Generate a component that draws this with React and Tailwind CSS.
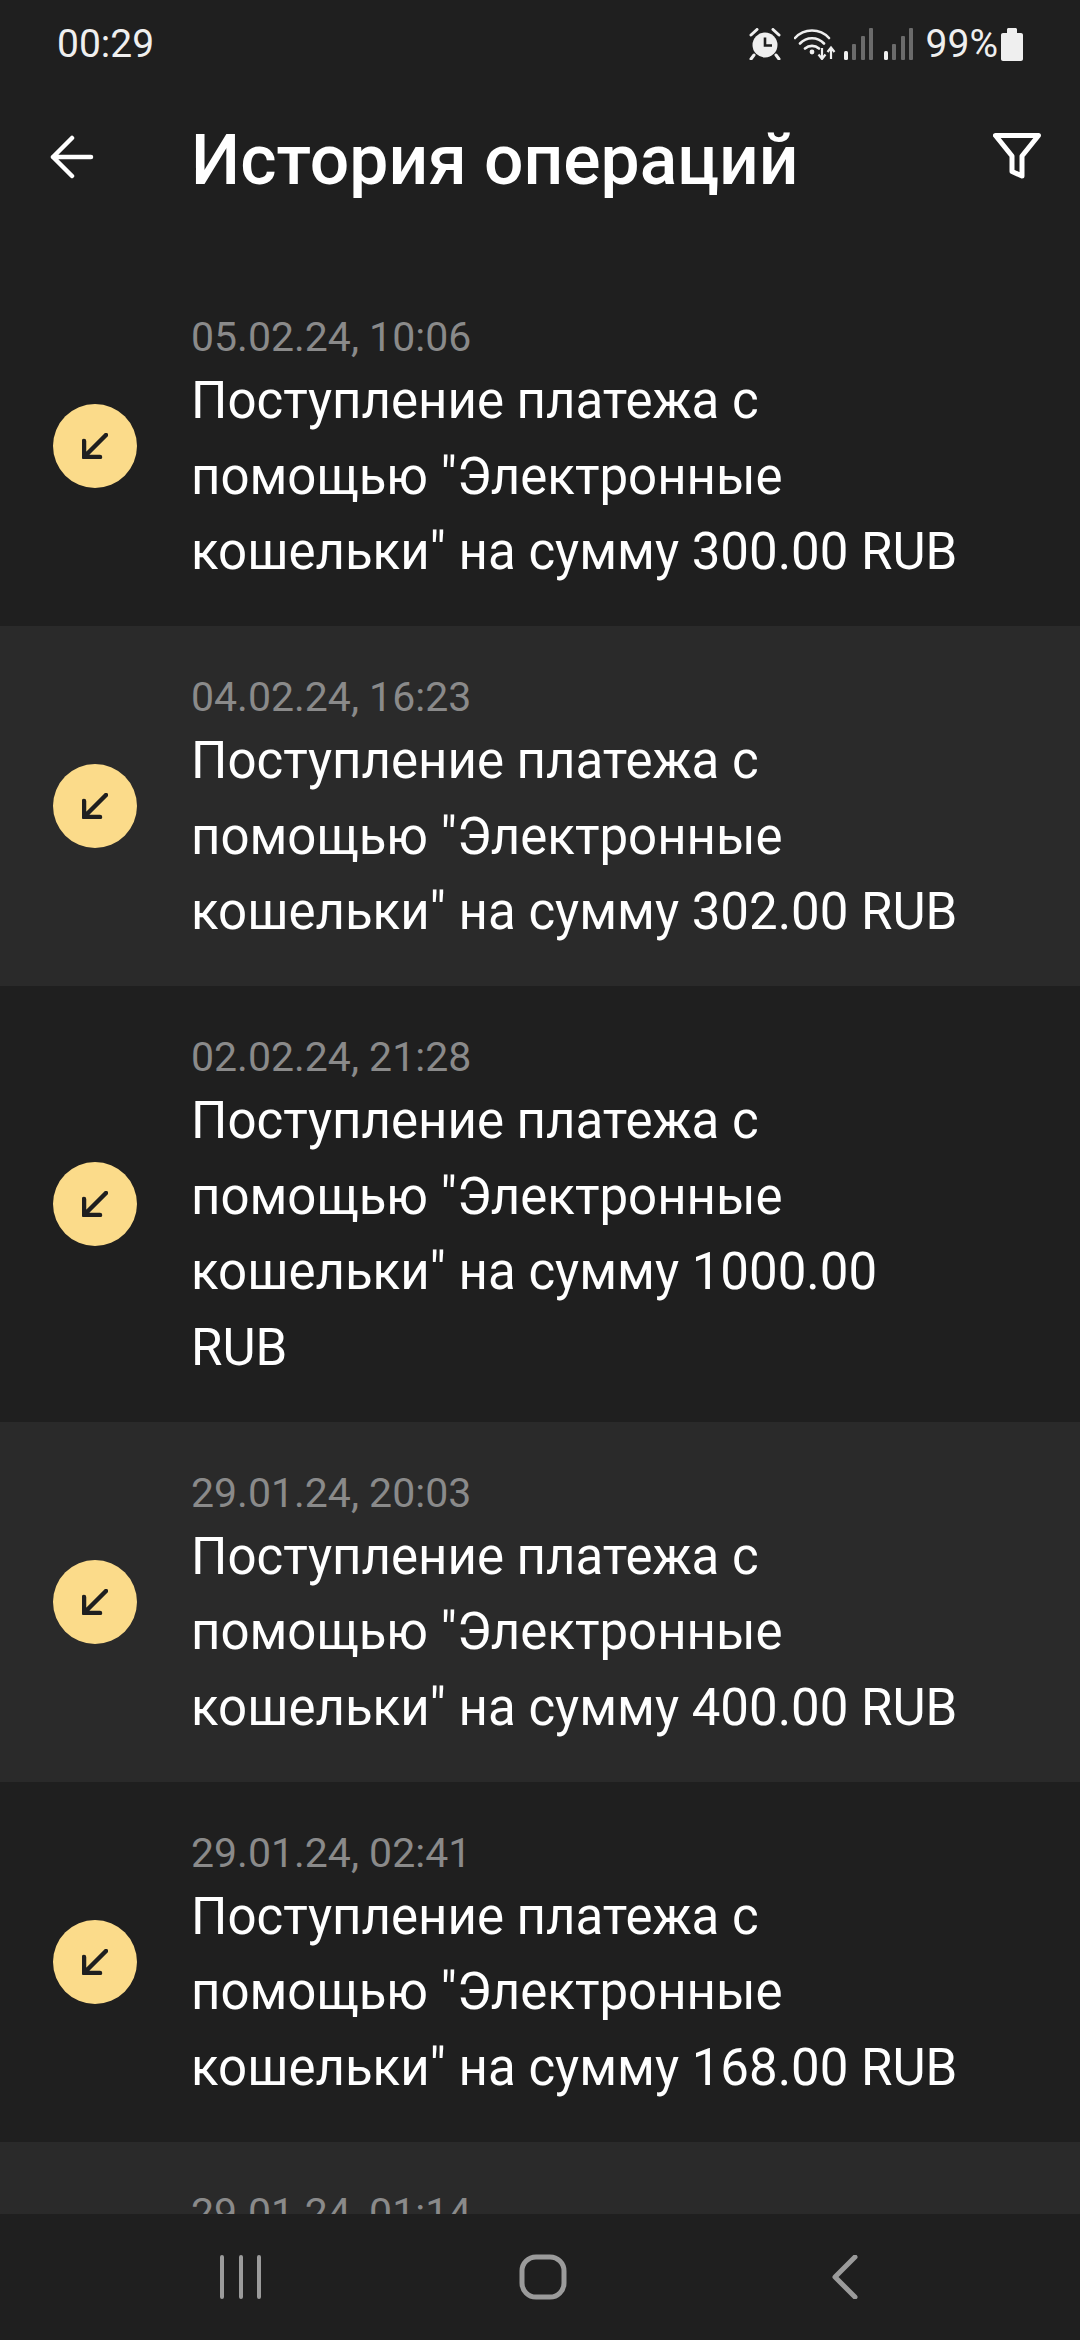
const operations = [
  { date: "05.02.24, 10:06", amount: "300.00" },
  { date: "04.02.24, 16:23", amount: "302.00" },
  { date: "02.02.24, 21:28", amount: "1000.00" },
  { date: "29.01.24, 20:03", amount: "400.00" },
  { date: "29.01.24, 02:41", amount: "168.00" },
  { date: "29.01.24, 01:14", amount: "500.00" },
];

const SignalIcon = () => (
  <svg width="30" height="32" viewBox="0 0 30 32">
    <rect x="0" y="23" width="4" height="9" rx="1.5" fill="#efefef" />
    <rect x="8" y="16" width="4" height="16" rx="1" fill="#6b6b6b" />
    <rect x="17" y="8" width="4" height="24" rx="1" fill="#6b6b6b" />
    <rect x="25" y="0" width="4" height="32" rx="1" fill="#6b6b6b" />
  </svg>
);

const StatusBar = () => (
  <div className="flex h-[88px] shrink-0 items-center justify-between pl-[57px] pr-[57px] text-[#efefef]">
    <span className="text-[39px] leading-none">00:29</span>
    <div className="flex items-center">
      <svg width="34" height="32" viewBox="0 0 34 32" className="mr-[12px]">
        <circle cx="17" cy="17" r="12.5" fill="#efefef" />
        <path d="M17 9.5V17.5H24" fill="none" stroke="#1f1f1f" strokeWidth="2.6" />
        <path d="M3 7L9 1.5M31 7L25 1.5M6 27L3 31M28 27L31 31" stroke="#efefef" strokeWidth="3" strokeLinecap="round" />
      </svg>
      <svg width="42" height="32" viewBox="0 0 42 32" className="mr-[8px]">
        <path d="M1 10C10 0 26 0 35 10M6 15.5C12.5 8.5 23.5 8.5 30 15.5M11 20.5C15 17 21 17 25 20.5" fill="none" stroke="#efefef" strokeWidth="2.6" strokeLinecap="round" />
        <circle cx="18" cy="24" r="2.4" fill="#efefef" />
        <path d="M28 20V30M24.5 26.5L28 31L31.5 26.5M37 31V20M33.5 24L37 19.5L40.5 24" fill="none" stroke="#efefef" strokeWidth="2.2" />
      </svg>
      <div className="mr-[10px]">
        <SignalIcon />
      </div>
      <div className="mr-[12px]">
        <SignalIcon />
      </div>
      <span className="mr-[3px] text-[39px] leading-none">99%</span>
      <svg width="22" height="33" viewBox="0 0 22 33">
        <path d="M6 1.5C6 .7 6.7 0 7.5 0H14.5C15.3 0 16 .7 16 1.5V5H20C21.1 5 22 5.9 22 7V31C22 32.1 21.1 33 20 33H2C.9 33 0 32.1 0 31V7C0 5.9 .9 5 2 5H6Z" fill="#efefef" />
      </svg>
    </div>
  </div>
);

const Header = () => (
  <div className="flex h-[178px] shrink-0 items-start pl-[50px] pr-[39px] pt-[44px]">
    <svg width="44" height="44" viewBox="0 0 44 44" className="mt-[3px] mr-[97px] shrink-0">
      <path d="M41 22H3M22 3L3 22L22 41" fill="none" stroke="#ffffff" strokeWidth="4.5" strokeLinecap="round" strokeLinejoin="round" />
    </svg>
    <h1 className="flex-1 text-[69.6px] leading-[56px] font-medium text-white">История операций</h1>
    <svg width="48" height="46" viewBox="0 0 48 46" className="mt-[1px] shrink-0">
      <path d="M2.5 2.5H45.5L29 23V43L19 38.5V23Z" fill="none" stroke="#ffffff" strokeWidth="5" strokeLinejoin="round" />
    </svg>
  </div>
);

const OperationRow = ({ item, striped }) => (
  <div className={`flex items-center pl-[53px] pr-[110px] ${striped ? "bg-[#2a2a2a]" : "bg-[#1f1f1f]"}`}>
    <div className="mr-[54px] flex h-[84px] w-[84px] shrink-0 items-center justify-center rounded-full bg-[#fbdb8a]">
      <svg width="26" height="26" viewBox="0 0 26 26">
        <path d="M24 2L2 24M2 8V24H18" fill="none" stroke="#1f1f1f" strokeWidth="4.5" strokeLinecap="round" strokeLinejoin="round" />
      </svg>
    </div>
    <div className="min-w-0 flex-1 pt-[45px] pb-[36.5px]">
      <div className="text-[41px] leading-[52px] text-[#8a8a8a]">{item.date}</div>
      <div className="text-[51px] leading-[75.5px] text-white">
        Поступление платежа с помощью "Электронные кошельки" на сумму {item.amount} RUB
      </div>
    </div>
  </div>
);

const NavBar = () => (
  <div className="flex h-[126px] shrink-0 items-center bg-[#1f1f1f] pl-[219px]">
    <svg width="44" height="44" viewBox="0 0 44 44" className="mr-[256px]">
      <path d="M3 2V42M22 2V42M40 2V42" stroke="#9b9b9b" strokeWidth="4" strokeLinecap="round" />
    </svg>
    <svg width="48" height="46" viewBox="0 0 48 46" className="mr-[265px]">
      <rect x="3" y="3" width="42" height="40" rx="14" fill="none" stroke="#9b9b9b" strokeWidth="5" />
    </svg>
    <svg width="26" height="44" viewBox="0 0 26 44">
      <path d="M23 2L3 22L23 42" fill="none" stroke="#9b9b9b" strokeWidth="5" strokeLinecap="round" strokeLinejoin="round" />
    </svg>
  </div>
);

export default function App() {
  return (
    <div className="flex h-[2340px] w-[1080px] flex-col overflow-hidden bg-[#1f1f1f] font-['Roboto',sans-serif]">
      <StatusBar />
      <Header />
      <div className="min-h-0 flex-1 overflow-hidden">
        {operations.map((item, index) => (
          <OperationRow key={index} item={item} striped={index % 2 === 1} />
        ))}
      </div>
      <NavBar />
    </div>
  );
}
